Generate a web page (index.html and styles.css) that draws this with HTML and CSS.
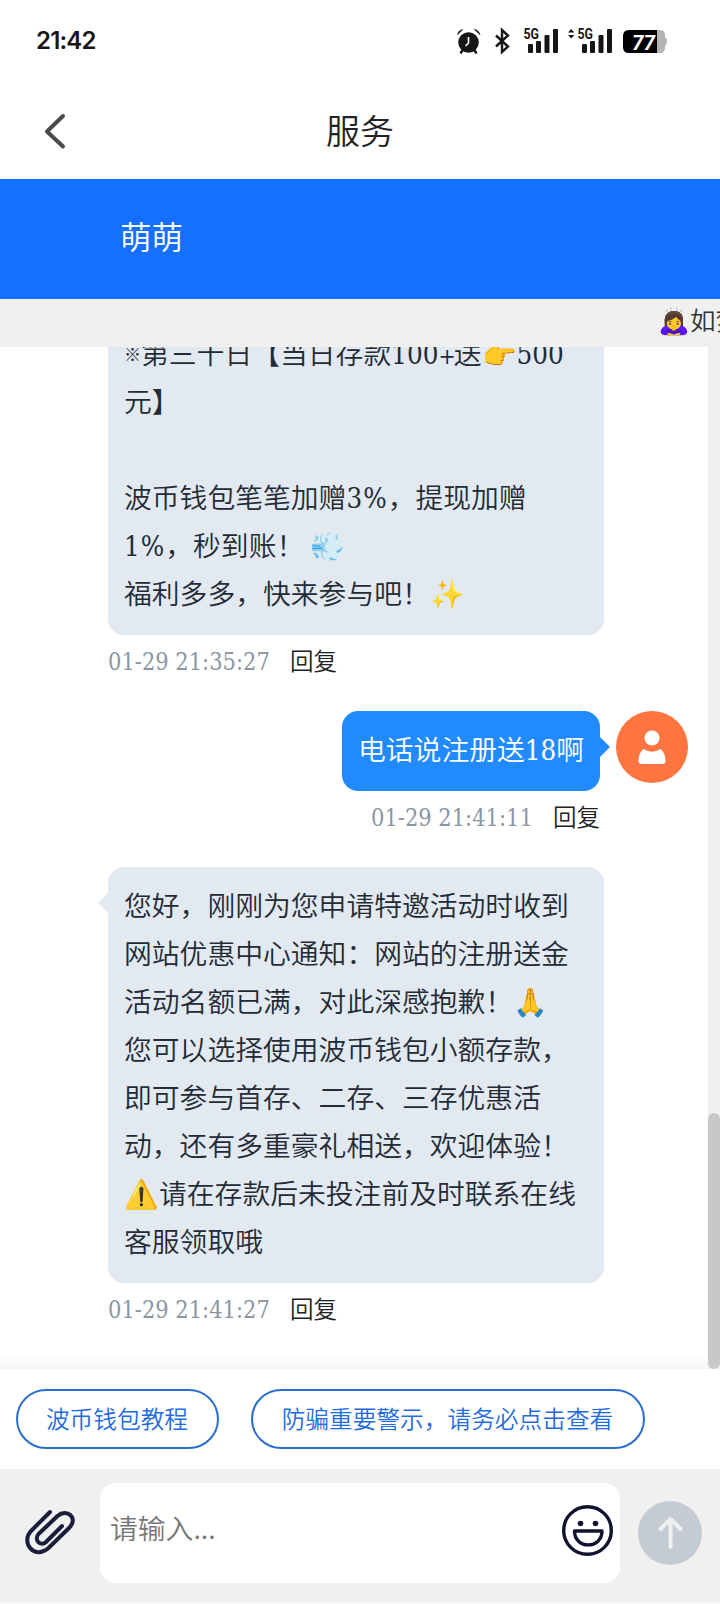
FILE: index.html
```html
<!DOCTYPE html>
<html lang="zh-CN">
<head>
<meta charset="utf-8">
<title>服务</title>
<link rel="stylesheet" href="styles.css">
</head>
<body>
<div class="app">
  <header class="status">
    <span class="clock">21:42</span>
    <svg class="status-icons" width="214" height="32" viewBox="0 0 214 32">
      <g fill="#161616">
        <circle cx="12.500" cy="17.500" r="10.300"/>
        <path d="M1 10.500a7.500 7.500 0 0 1 6.500-6.500zM17.500 4a7.500 7.500 0 0 1 7 6.500z"/>
      </g>
      <path d="M6.500 25.500l-1.500 2M18.500 25.500l1.500 2" stroke="#161616" stroke-width="2.500" stroke-linecap="round"/>
      <path d="M12.500 12v6l-3 3" stroke="#fff" stroke-width="1.600" fill="none"/>
      <path d="M40 10.500l12 11-6 5.500V5l6 5.500-12 11" stroke="#161616" stroke-width="2.400" fill="none"/>
      <g fill="#161616">
        <rect x="72" y="19" width="5" height="9" rx="1"/><rect x="80" y="16" width="5" height="12" rx="1"/><rect x="88.500" y="10" width="5" height="18" rx="1"/><rect x="97" y="4" width="5" height="24" rx="1"/>
        <rect x="126" y="19" width="5" height="9" rx="1"/><rect x="134" y="16" width="5" height="12" rx="1"/><rect x="142.500" y="10" width="5" height="18" rx="1"/><rect x="151" y="4" width="5" height="24" rx="1"/>
        <path d="M112 7.500l3.200-3.500 3.200 3.500zM112 10h6.400l-3.200 3.500z"/>
        <text class="net" x="67.500" y="14" textLength="15.500" lengthAdjust="spacingAndGlyphs">5G</text>
        <text class="net" x="121.500" y="14" textLength="15.500" lengthAdjust="spacingAndGlyphs">5G</text>
      </g>
      <path d="M200 5h4q5 0 5 5v2q2 1 2 4.500t-2 4.500v2q0 5-5 5h-4z" fill="#b4b4b4"/>
      <path d="M173 5h28v23h-28q-6 0-6-6V11q0-6 6-6z" fill="#000"/>
      <text class="battery" x="176" y="24.500" textLength="23" lengthAdjust="spacingAndGlyphs" fill="#fff">77</text>
    </svg>
  </header>
  <nav class="nav">
    <svg class="back" width="24" height="38" viewBox="0 0 24 38"><path d="M19 4L3 19.500 19 34.500" fill="none" stroke="#4a4a4a" stroke-width="4" stroke-linecap="round" stroke-linejoin="round"/></svg>
    <h1 class="title">服务</h1>
  </nav>
  <div class="agent">萌萌</div>
  <div class="marquee"><span class="emoji">🙇‍♀️</span>如梦</div>
  <main class="chat">
    <section class="msg">
      <div class="bubble">
        <p><span class="mark">※</span>第三十日【当日存款<b>100<i>+</i></b>送<span class="emoji">👉</span><b>500</b></p>
        <p>元】</p>
        <p>&nbsp;</p>
        <p>波币钱包笔笔加赠<b class="pct">3%</b>，提现加赠</p>
        <p><b class="pct">1%</b>，秒到账！ <span class="emoji">💨</span></p>
        <p>福利多多，快来参与吧！<span class="emoji">✨</span></p>
      </div>
      <div class="meta"><time>01-29 21:35:27</time><span>回复</span></div>
    </section>
    <section class="msg mine">
      <div class="row">
        <div class="bubble blue"><p>电话说注册送<b>18</b>啊</p></div>
        <svg class="avatar" width="72" height="72" viewBox="0 0 72 72"><circle cx="36" cy="36" r="36" fill="#ff7541"/><circle cx="36" cy="27" r="7.500" fill="#fff"/><path d="M27.500 38q8.500 5.500 17 0 5 4 5 12 0 3-3 3h-21q-3 0-3-3 0-8 5-12z" fill="#fff"/></svg>
      </div>
      <div class="meta"><time>01-29 21:41:11</time><span>回复</span></div>
    </section>
    <section class="msg">
      <div class="bubble tail">
        <p>您好，刚刚为您申请特邀活动时收到</p>
        <p>网站优惠中心通知：网站的注册送金</p>
        <p>活动名额已满，对此深感抱歉！<span class="emoji">🙏</span></p>
        <p>您可以选择使用波币钱包小额存款，</p>
        <p>即可参与首存、二存、三存优惠活</p>
        <p>动，还有多重豪礼相送，欢迎体验！</p>
        <p><span class="emoji">⚠️</span>请在存款后未投注前及时联系在线</p>
        <p>客服领取哦</p>
      </div>
      <div class="meta"><time>01-29 21:41:27</time><span>回复</span></div>
    </section>
    <div class="fade"></div>
    <div class="track"><div class="thumb"></div></div>
  </main>
  <div class="quick"><button class="pill tutorial">波币钱包教程</button><button class="pill warning">防骗重要警示，请务必点击查看</button></div>
  <footer class="composer">
    <svg class="clip" width="54" height="50" viewBox="0 0 54 50"><path d="M26 4L7.500 22.500C-4 34 10 52 24 40.500L45 20C55 10 43 0 33.500 8L14.500 26c-5 6 2 13 7.500 8L38 18" fill="none" stroke="#1b1d3a" stroke-width="4" stroke-linecap="round" stroke-linejoin="round"/></svg>
    <div class="field"><span class="placeholder">请输入...</span>
      <svg class="smile" width="52" height="52" viewBox="0 0 52 52"><g fill="none" stroke="#11132e" stroke-width="3.400"><circle cx="25.500" cy="26.500" r="23.800"/><path d="M12.500 27h27.500c0 18.500-27.500 18.500-27.500 0z" stroke-linejoin="round"/></g><circle cx="18.500" cy="19.500" r="2.800" fill="#11132e"/><circle cx="33.500" cy="19.500" r="2.800" fill="#11132e"/></svg>
    </div>
    <svg class="send" width="64" height="64" viewBox="0 0 64 64"><circle cx="32" cy="32" r="32" fill="#c5cbd3"/><path d="M32.500 46V18M22.500 28l10-10 10 10" fill="none" stroke="#f0f0f0" stroke-width="4" stroke-linecap="round" stroke-linejoin="round"/></svg>
  </footer>
</div>
</body>
</html>
```
FILE: styles.css
```css
* { box-sizing: border-box; }
body { margin: 0; background: #fff; }
.app { width: 720px; height: 1604px; display: flex; flex-direction: column; overflow: hidden; background: #fff; color: #242b35; font-family: "Noto Sans CJK SC", sans-serif; font-weight: 350; }
.status { height: 84px; flex: none; display: flex; justify-content: space-between; align-items: flex-start; padding: 15px 50px 0 36px; }
.clock { font: 600 24px/52px Inter, sans-serif; letter-spacing: -.8px; color: #161616; }
.status-icons { display: block; margin-top: 10px; }
.net { font: 700 14px Roboto, sans-serif; }
.battery { font: italic 700 21px Roboto, sans-serif; }
.nav { height: 95px; flex: none; display: grid; grid-template-columns: 100px 1fr 100px; align-items: center; padding-bottom: 1px; }
.back { margin-left: 44px; }
.title { margin: 0; padding-bottom: 2px; text-align: center; font-size: 34px; font-weight: 350; line-height: 50px; color: #222; }
.agent { height: 120px; flex: none; padding: 0 120px; background: #1670ff; color: #fff; font-size: 31.5px; line-height: 112px; }
.marquee { height: 48px; flex: none; padding-left: 658px; background: #f0f0f0; color: #333; font-size: 25.500px; line-height: 39px; white-space: nowrap; overflow: hidden; }
.chat { position: relative; height: 1022px; flex: none; display: flex; flex-direction: column; justify-content: flex-end; overflow: hidden; padding: 0 32px 10px 108px; }
.msg { flex: none; display: flex; flex-direction: column; align-items: flex-start; }
.bubble { position: relative; width: 496px; padding: 13px 16px 19px; border-radius: 16px; background: #e2e9f1; }
.bubble p { margin: 0; height: 48px; font-size: 27.8px; line-height: 48px; white-space: nowrap; }
.bubble b { font-family: "DejaVu Serif Condensed", "DejaVu Serif", serif; font-stretch: condensed; font-weight: 300; font-size: 27.500px; line-height: 1; }
.bubble b i { font-style: normal; font-size: 23px; letter-spacing: -2px; }
.pct { letter-spacing: 1px; }
.mark { font-size: 17px; font-weight: 700; line-height: 1; vertical-align: 3px; }
.tail::before, .blue::after { content: ""; position: absolute; top: 26px; border: 10px solid transparent; }
.tail::before { left: -20px; border-right-color: #e2e9f1; }
.mine { align-items: flex-end; }
.row { display: flex; gap: 16px; }
.blue { width: 258px; height: 80px; background: #228aff; color: #fff; }
.blue::after { left: 258px; border-left-color: #228aff; }
.meta { display: flex; gap: 20px; height: 76px; font-size: 23.5px; line-height: 51px; color: #222; white-space: nowrap; }
.mine .meta { padding-right: 88px; }
.meta time { width: 162px; padding-top: 2px; font-family: "DejaVu Serif Condensed", "DejaVu Serif", serif; font-stretch: condensed; font-weight: 400; font-size: 23.400px; color: #8b96a3; }
.fade { position: absolute; left: 0; right: 12px; bottom: 0; height: 18px; background: linear-gradient(#fff, #f6f6f6); }
.track { position: absolute; right: 0; top: 0; width: 12px; height: 100%; display: flex; align-items: flex-end; background: #f0f0f0; }
.thumb { width: 12px; height: 256px; border-radius: 6px; background: #c8c8c8; }
.quick { height: 100px; flex: none; display: flex; align-items: center; gap: 32px; padding: 0 16px; }
.pill { height: 60px; padding: 0 1px 2px 0; border: 2px solid #2a6fd0; border-radius: 30px; background: #fff; color: #1f6be0; font: 350 23.7px/52px "Noto Sans CJK SC", sans-serif; white-space: nowrap; }
.tutorial { width: 203px; }
.warning { width: 394px; }
.composer { height: 135px; flex: none; display: flex; align-items: flex-start; padding: 14px 18px 0 24px; background: #f0f0f0; border-bottom: 1px solid #fafafa; }
.clip { margin: 25px 22px 0 0; }
.field { width: 520px; height: 100px; display: flex; justify-content: space-between; padding: 0 6px 0 10px; border-radius: 16px; background: #fff; }
.placeholder { color: #777; font-size: 27.8px; line-height: 89px; }
.smile { margin-top: 21px; }
.send { margin: 18px 0 0 18px; }
```
